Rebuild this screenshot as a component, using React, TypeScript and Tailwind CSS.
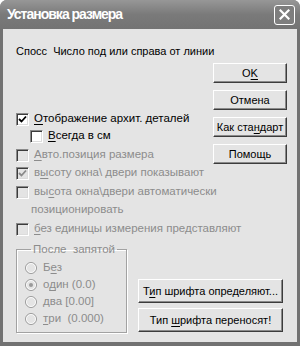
import type {ReactNode} from "react";

const font = {fontFamily: '"Liberation Sans", Arial, sans-serif'};

const U = ({children}: {children: ReactNode}) => <span className="underline underline-offset-[2px]">{children}</span>;

const Button = ({children, className}: {children: ReactNode, className: string}) => (
    <div className={`flex items-center justify-center bg-[#e4e4e4] border border-t-white border-l-white border-r-[#3c3c3c] border-b-[#3c3c3c] shadow-[inset_-1px_-1px_0_#8a8a8a] text-[11px] text-black whitespace-nowrap ${className}`}>
        <span>{children}</span>
    </div>
);

const Check = ({checked, disabled}: {checked?: boolean, disabled?: boolean}) => (
    <div className={`w-[13px] h-[13px] shrink-0 border border-t-[#8a8a8a] border-l-[#8a8a8a] border-r-white border-b-white shadow-[inset_1px_1px_0_#3c3c3c,inset_-1px_-1px_0_#dcdcdc] flex items-center justify-center ${disabled ? 'bg-[#e4e4e4]' : 'bg-white'}`}>
        {checked && (
            <svg width="9" height="9" viewBox="0 0 9 9">
                <path d="M1 4 L3.5 6.5 L8 1.5" fill="none" stroke={disabled ? '#8a8a8a' : '#000'} strokeWidth="1.8"/>
            </svg>
        )}
    </div>
);

const Radio = ({checked}: {checked?: boolean}) => (
    <svg width="12" height="12" viewBox="0 0 12 12" className="shrink-0">
        <circle cx="6" cy="6" r="5.5" fill="#e4e4e4" stroke="#9a9a9a"/>
        <circle cx="6" cy="6" r="4.5" fill="none" stroke="#ffffff" strokeWidth="0.8"/>
        {checked && <circle cx="6" cy="6" r="2" fill="#9a9a9a"/>}
    </svg>
);

const Row = ({children, className}: {children: ReactNode, className: string}) => (
    <div className={`flex items-center h-[16px] text-[11.5px] whitespace-nowrap ${className}`}>{children}</div>
);

export default function App() {
    return (
        <div className="w-[300px] h-[346px] bg-white" style={font}>
            <div className="w-[300px] h-[346px] flex flex-col bg-[#727272] rounded-t-[7px] overflow-hidden">
                <div className="h-[29px] shrink-0 flex items-center justify-between pl-[7px] pr-[5px] bg-gradient-to-b from-[#979797] via-[#7a7a7a] to-[#737373]">
                    <span className="text-white font-bold text-[14px] tracking-[-1px]">Установка размера</span>
                    <div className="w-[21px] h-[20px] border border-white rounded-[3px] bg-[#7e7e7e] flex items-center justify-center">
                        <svg width="11" height="11" viewBox="0 0 11 11">
                            <path d="M1.5 1.5 L9.5 9.5 M9.5 1.5 L1.5 9.5" stroke="#fff" strokeWidth="2.2" strokeLinecap="square"/>
                        </svg>
                    </div>
                </div>
                <div className="flex-1 mx-[3px] mb-[4px] bg-[#e4e4e4] pl-[13px] text-black">
                    <div className="flex">
                        <div className="w-[197px] flex flex-col">
                            <div className="mt-[15px] h-[14px] leading-[14px] text-[11px] whitespace-nowrap">Спосс&nbsp; Число под или справа от линии</div>
                            <Row className="mt-[53px] gap-[5px]"><Check checked/><span><U>О</U>тображение архит. деталей</span></Row>
                            <Row className="mt-[1px] pl-[14px] gap-[5px]"><Check/><span><U>В</U>сегда в см</span></Row>
                            <Row className="mt-[3px] gap-[5px] text-[#8c8c8c]"><Check disabled/><span><U>А</U>вто.позиция размера</span></Row>
                        </div>
                        <div className="flex flex-col gap-[7px] mt-[34px]">
                            <Button className="w-[74px] h-[20px]">O<U>K</U></Button>
                            <Button className="w-[74px] h-[20px]">Отмена</Button>
                            <Button className="w-[74px] h-[20px]">Как ста<U>н</U>дарт</Button>
                            <Button className="w-[74px] h-[20px]">Помощь</Button>
                        </div>
                    </div>
                    <div className="flex flex-col text-[#8c8c8c]">
                        <Row className="mt-[1px] gap-[5px]"><Check checked disabled/><span>в<U>ы</U>соту окна\ двери показывают</span></Row>
                        <Row className="mt-[3px] gap-[5px]"><Check disabled/><span>вы<U>с</U>ота окна\двери автоматически</span></Row>
                        <Row className="mt-[2px] pl-[15px]"><span>позиционировать</span></Row>
                        <Row className="mt-[3px] gap-[5px]"><Check disabled/><span><U>б</U>ез единицы измерения представляют</span></Row>
                    </div>
                    <div className="flex mt-[5px]">
                        <fieldset className="w-[111px] h-[91px] border border-[#a2a2a2] shadow-[1px_1px_0_#fff,inset_1px_1px_0_#fff] pl-[8px] text-[#8c8c8c] text-[11.5px]">
                            <legend className="ml-[6px] px-[2px] leading-[14px]">После &nbsp;запятой</legend>
                            <div className="flex flex-col mt-[3px]">
                                <div className="flex items-center h-[17px] gap-[6px]"><Radio/><span>Б<U>е</U>з</span></div>
                                <div className="flex items-center h-[17px] gap-[6px]"><Radio checked/><span>о<U>д</U>ин (0.0)</span></div>
                                <div className="flex items-center h-[17px] gap-[6px]"><Radio/><span>два <U>[</U>0.00]</span></div>
                                <div className="flex items-center h-[17px] gap-[6px]"><Radio/><span><U>т</U>ри &nbsp;(0.000)</span></div>
                            </div>
                        </fieldset>
                        <div className="flex flex-col gap-[5px] ml-[11px] mt-[37px]">
                            <Button className="w-[145px] h-[24px]">Т<U>и</U>п шрифта определяют...</Button>
                            <Button className="w-[145px] h-[24px]">Тип <U>ш</U>рифта переносят!</Button>
                        </div>
                    </div>
                </div>
            </div>
        </div>
    );
}
